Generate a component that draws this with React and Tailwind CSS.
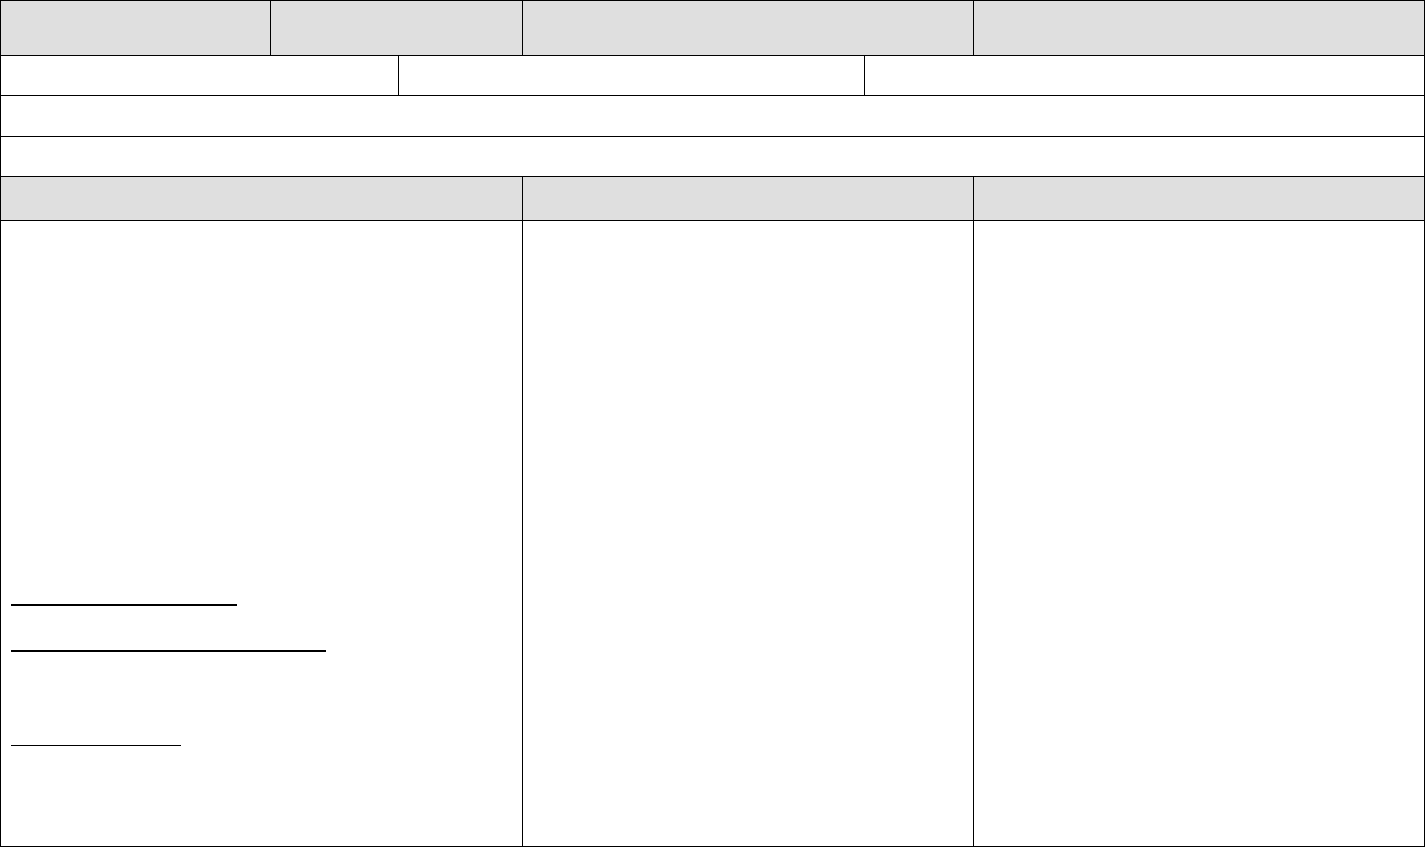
import React from 'react';

const line = 'border-black';

const App = () => {
  return (
    <div className="w-[1425px] h-[847px] bg-white overflow-hidden font-['Liberation_Sans',Arial,sans-serif]">
      <div className={`w-[1425px] border-l border-t ${line} flex flex-col`}>
        {/* Row 1 - header */}
        <div className="flex h-[55px]">
          <div className={`w-[270px] bg-[#dfdfdf] border-r border-b ${line}`} />
          <div className={`w-[252px] bg-[#dfdfdf] border-r border-b ${line}`} />
          <div className={`w-[451px] bg-[#dfdfdf] border-r border-b ${line}`} />
          <div className={`w-[451px] bg-[#dfdfdf] border-r border-b ${line}`} />
        </div>

        {/* Row 2 */}
        <div className="flex h-[40px]">
          <div className={`w-[398px] border-r border-b ${line}`} />
          <div className={`w-[466px] border-r border-b ${line}`} />
          <div className={`w-[560px] border-r border-b ${line}`} />
        </div>

        {/* Row 3 */}
        <div className={`h-[41px] border-r border-b ${line}`} />

        {/* Row 4 */}
        <div className={`h-[40px] border-r border-b ${line}`} />

        {/* Row 5 - header */}
        <div className="flex h-[44px]">
          <div className={`w-[522px] bg-[#dfdfdf] border-r border-b ${line}`} />
          <div className={`w-[451px] bg-[#dfdfdf] border-r border-b ${line}`} />
          <div className={`w-[451px] bg-[#dfdfdf] border-r border-b ${line}`} />
        </div>

        {/* Row 6 - body */}
        <div className="flex h-[626px]">
          <div className={`w-[522px] border-r border-b ${line} pl-[10px] pt-[383px] flex flex-col`}>
            <div className="w-[226px] h-[2px] bg-black" />
            <div className="w-[315px] h-[2px] bg-black mt-[44px]" />
            <div className="w-[170px] h-[1px] bg-black mt-[93px]" />
          </div>
          <div className={`w-[451px] border-r border-b ${line}`} />
          <div className={`w-[451px] border-r border-b ${line}`} />
        </div>
      </div>
    </div>
  );
};

export default App;
